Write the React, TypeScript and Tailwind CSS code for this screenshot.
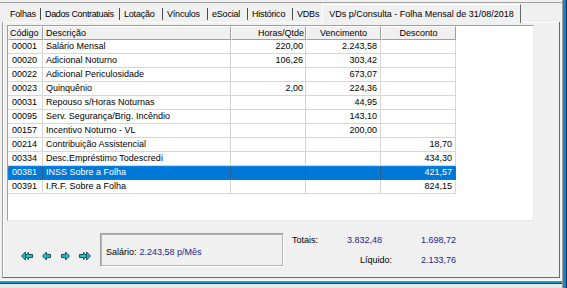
import React from "react";

const rows: [string, string, string, string, string][] = [
  ["00001", "Salário Mensal", "220,00", "2.243,58", ""],
  ["00020", "Adicional Noturno", "106,26", "303,42", ""],
  ["00022", "Adicional Periculosidade", "", "673,07", ""],
  ["00023", "Quinquênio", "2,00", "224,36", ""],
  ["00031", "Repouso s/Horas Noturnas", "", "44,95", ""],
  ["00095", "Serv. Segurança/Brig. Incêndio", "", "143,10", ""],
  ["00157", "Incentivo Noturno - VL", "", "200,00", ""],
  ["00214", "Contribuição Assistencial", "", "", "18,70"],
  ["00334", "Desc.Empréstimo Todescredi", "", "", "434,30"],
  ["00381", "INSS Sobre a Folha", "", "", "421,57"],
  ["00391", "I.R.F. Sobre a Folha", "", "", "824,15"],
];

const SEL = 9;

function Sep() {
  return <span className="w-px shrink-0 h-[12px] bg-[#4a4a4a] self-center mt-[3px]" />;
}

function Arrow({ dir, double }: { dir: "l" | "r"; double?: boolean }) {
  const w = double ? 12 : 9;
  const flip = dir === "r" ? `translate(${w},0) scale(-1,1)` : undefined;
  return (
    <svg width={w} height={10} viewBox={`0 0 ${w} 10`}>
      <g transform={flip} fill="#19c0cc" stroke="#1d4a50" strokeWidth="1" strokeLinejoin="miter">
        {double ? (
          <>
            <polygon points="4,5 7.5,1.5 7.5,3.5 11.5,3.5 11.5,6.5 7.5,6.5 7.5,8.5" />
            <polygon points="0.5,5 4.5,1 4.5,9" />
          </>
        ) : (
          <polygon points="0.5,5 4.5,1 4.5,3.5 8.5,3.5 8.5,6.5 4.5,6.5 4.5,9" />
        )}
      </g>
    </svg>
  );
}

export default function App() {
  return (
    <div className="w-[567px] h-[288px] overflow-hidden bg-[#f0f0f0] flex font-['Liberation_Sans',Arial,sans-serif] text-[9px] leading-[12px] text-black">
      {/* main */}
      <div className="w-[562px] flex flex-col">
        <div className="h-[2px]" />
        <div className="h-px bg-[#a0a0a0]" />
        {/* tabs */}
        <div className="h-[19px] flex items-end relative z-10 pl-[5px] whitespace-nowrap">
          <span className="w-[35px] shrink-0 h-[19px] pl-[5px] pt-[5px] tracking-[-0.2px]">Folhas</span>
          <Sep />
          <span className="w-[78px] shrink-0 h-[19px] pl-[4px] pt-[5px] tracking-[-0.35px]">Dados Contratuais</span>
          <Sep />
          <span className="w-[42px] shrink-0 h-[19px] pl-[4px] pt-[5px] tracking-[-0.2px]">Lotação</span>
          <Sep />
          <span className="w-[44px] shrink-0 h-[19px] pl-[4px] pt-[5px] tracking-[-0.2px]">Vínculos</span>
          <Sep />
          <span className="w-[39px] shrink-0 h-[19px] pl-[4px] pt-[5px] tracking-[-0.2px]">eSocial</span>
          <Sep />
          <span className="w-[44px] shrink-0 h-[19px] pl-[4px] pt-[5px] tracking-[-0.2px]">Histórico</span>
          <Sep />
          <span className="w-[29px] shrink-0 h-[19px] pl-[4px] pt-[5px] tracking-[-0.2px]">VDBs</span>
          <div className="w-[199px] shrink-0 h-[19px] -mb-px bg-[#f0f0f0] border-t border-l border-white border-r border-r-[#696969] flex justify-center pt-[3px]">
            VDs p/Consulta - Folha Mensal de 31/08/2018
          </div>
        </div>
        {/* panel */}
        <div className="ml-[2px] w-[558px] h-[256px] border-l border-[#a0a0a0] border-b border-b-[#696969] border-r border-r-[#696969] flex flex-col">
          <div className="flex-1 border-t border-l border-white flex flex-col pl-[3px] pt-[2px]">
            {/* grid */}
            <div className="w-[527px] h-[196px] bg-white border-t border-l border-[#a0a0a0] border-r border-b border-r-[#e8e8e8] border-b-[#e8e8e8] flex flex-col">
              <div className="flex h-[14px]">
                <div className="w-[35px] border-r border-b border-[#a0a0a0] bg-[#f0f0f0] border-t border-t-white border-l border-l-white pl-[1px] leading-[12px]">Código</div>
                <div className="w-[188px] border-r border-b border-[#a0a0a0] bg-[#f0f0f0] border-t border-t-white border-l border-l-white pl-[2px] leading-[12px]">Descrição</div>
                <div className="w-[75px] border-r border-b border-[#a0a0a0] bg-[#f0f0f0] border-t border-t-white border-l border-l-white pr-[1px] text-right leading-[12px]">Horas/Qtde</div>
                <div className="w-[75px] border-r border-b border-[#a0a0a0] bg-[#f0f0f0] border-t border-t-white border-l border-l-white text-center leading-[12px]">Vencimento</div>
                <div className="w-[75px] border-r border-b border-[#a0a0a0] bg-[#f0f0f0] border-t border-t-white border-l border-l-white text-center leading-[12px]">Desconto</div>
              </div>
              {rows.map((r, i) => {
                const sel = i === SEL;
                const line = sel ? "border-[#2a5f8f]" : "border-[#d6d6d6]";
                return (
                  <div
                    key={r[0]}
                    className={`flex h-[14px] w-[448px] ${sel ? "bg-[#0078d7] text-white outline-1 outline-dotted outline-[#9a6a30] -outline-offset-1" : ""}`}
                  >
                    <div className={`w-[35px] border-r border-b ${line} pl-[4px] leading-[13px]`}>{r[0]}</div>
                    <div className={`w-[188px] border-r border-b ${line} pl-[3px] leading-[13px]`}>{r[1]}</div>
                    <div className={`w-[75px] border-r border-b ${line} pr-[2px] text-right leading-[13px]`}>{r[2]}</div>
                    <div className={`w-[75px] border-r border-b ${line} pr-[3px] text-right leading-[13px]`}>{r[3]}</div>
                    <div className={`w-[75px] border-r border-b ${line} pr-[3px] text-right leading-[13px]`}>{r[4]}</div>
                  </div>
                );
              })}
            </div>
            {/* bottom area */}
            <div className="flex-1 flex items-start">
              <div className="mt-[30px] ml-[14px] flex items-center">
                <Arrow dir="l" double />
                <span className="w-[9px]" />
                <Arrow dir="l" />
                <span className="w-[10px]" />
                <Arrow dir="r" />
                <span className="w-[9px]" />
                <Arrow dir="r" double />
              </div>
              <div className="ml-[9px] mt-[12px] w-[184px] h-[34px] border border-t-[#a0a0a0] border-l-[#a0a0a0] border-r-white border-b-white">
                <div className="w-full h-full border border-[#b4b4b4] flex items-center pl-[4px] pt-[3px]">
                  <span>Salário:</span>
                  <span className="ml-[3px] text-[#24248f]">2.243,58 p/Mês</span>
                </div>
              </div>
              <div className="ml-[8px] mt-[13px] flex flex-col">
                <div className="flex h-[12px]">
                  <span className="w-[50px]">Totais:</span>
                  <span className="w-[40px] text-right text-[#24248f]">3.832,48</span>
                  <span className="w-[74px] text-right text-[#24248f]">1.698,72</span>
                </div>
                <div className="flex h-[12px] mt-[8px]">
                  <span className="w-[100px] text-right">Líquido:</span>
                  <span className="w-[64px] text-right text-[#24248f]">2.133,76</span>
                </div>
              </div>
            </div>
          </div>
        </div>
        <div className="h-[2px]" />
        <div className="h-px bg-white" />
        <div className="h-[2px] bg-[#1a9cc8]" />
        <div className="h-px bg-[#1d3a4a]" />
        <div className="flex-1 bg-[#e8e8e8]" />
      </div>
      {/* right window edge */}
      <div className="w-px bg-[#a0a0a0]" />
      <div className="w-[3px] bg-[#1a82c4]" />
      <div className="w-px bg-[#14324a]" />
    </div>
  );
}
